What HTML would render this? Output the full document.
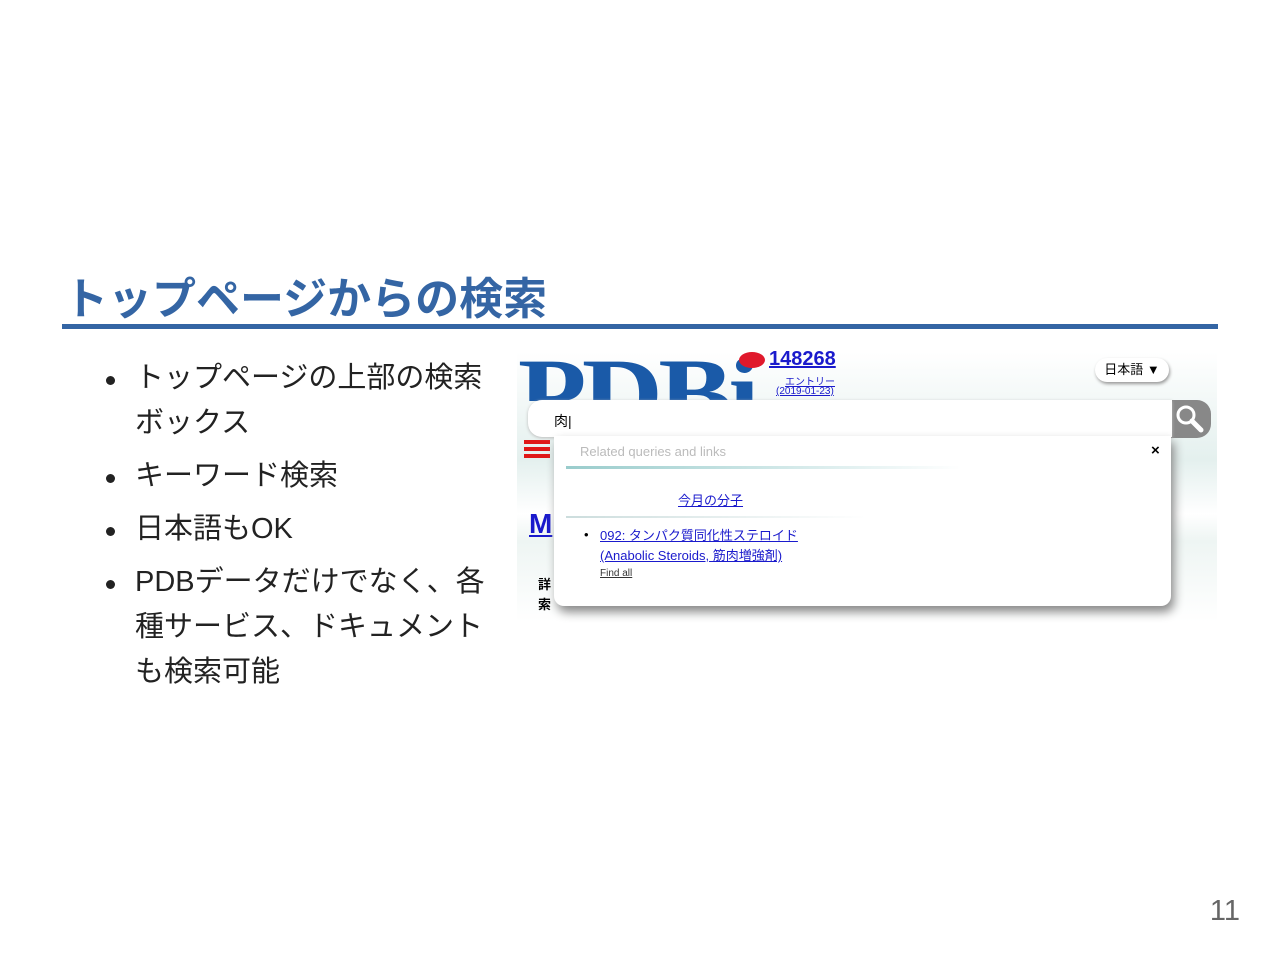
<!DOCTYPE html>
<html><head><meta charset="utf-8"><style>
body{margin:0;width:1280px;height:960px;background:#fff;position:relative;overflow:hidden;font-family:"Liberation Sans","Noto Sans CJK JP",sans-serif}
.a{position:absolute}
h1{position:absolute;left:64px;top:263px;margin:0;font-size:44px;font-weight:bold;color:#3465a4;letter-spacing:0px}
.rule{left:62px;top:324px;width:1156px;height:5px;background:#3465a4}
ul{position:absolute;left:100px;top:356px;margin:0;padding:0;list-style:none;font-size:29px;color:#222;line-height:45px}
li{position:relative;padding-left:35px;margin-bottom:8px;width:360px}
li:before{content:"";position:absolute;left:6px;top:20px;width:9px;height:9px;border-radius:50%;background:#222}
.num{right:40px;top:895px;font-size:29px;color:#666}
</style></head><body>
<h1>トップページからの検索</h1>
<div class="a rule"></div>
<ul>
<li>トップページの上部の検索ボックス</li>
<li>キーワード検索</li>
<li>日本語もOK</li>
<li>PDBデータだけでなく、各種サービス、ドキュメントも検索可能</li>
</ul>
<div class="a" style="left:517px;top:352px;width:700px;height:270px;background:linear-gradient(#fff,#e4f0ee 40%,#fff 60%,#eef5f3 70%,#fff)"></div>
<div class="a" style="left:518px;top:344px;font-family:'Liberation Serif',serif;font-weight:bold;font-size:100px;color:#1a5aa8;letter-spacing:-4px;line-height:100px;height:57px;overflow:hidden;transform:scaleX(1.12);transform-origin:left top">PDBi</div>
<div class="a" style="left:739px;top:352px;width:26px;height:16px;border-radius:50%;background:#e0192c"></div>
<div class="a" style="left:769px;top:348px;font-size:20px;font-weight:bold;color:#1a1acc;text-decoration:underline">148268</div>
<div class="a" style="left:785px;top:373px;font-size:10px;color:#1a1acc;text-decoration:underline">エントリー</div>
<div class="a" style="left:776px;top:386px;font-size:10px;color:#1a1acc;text-decoration:underline">(2019-01-23)</div>
<div class="a" style="left:1095px;top:358px;width:74px;height:24px;border-radius:12px;background:#fff;box-shadow:1px 2px 3px #999;font-size:13px;line-height:24px;text-align:center">日本語 ▼</div>
<div class="a" style="left:524px;top:440px;width:26px;height:4px;background:#e01818;box-shadow:0 7px 0 #e01818,0 14px 0 #e01818"></div>
<div class="a" style="left:529px;top:508px;font-size:28px;font-weight:bold;color:#1a1acc;text-decoration:underline">M</div>
<div class="a" style="left:538px;top:575px;font-size:13px;font-weight:bold;line-height:20px">詳<br>索</div>
<div class="a" style="left:1165px;top:400px;width:46px;height:38px;border-radius:0 14px 14px 0;background:#888"></div>
<svg class="a" style="left:1174px;top:403px" width="32" height="32" viewBox="0 0 32 32"><circle cx="12" cy="12" r="8" fill="none" stroke="#fff" stroke-width="3"/><path d="M18 18 L27 27" stroke="#fff" stroke-width="5" stroke-linecap="round"/></svg>
<div class="a" style="left:528px;top:400px;width:644px;height:37px;background:#fff;border-radius:14px 0 0 14px;box-shadow:0 1px 3px #bbb"></div>
<div class="a" style="left:554px;top:411px;font-size:14px">肉|</div>
<div class="a" style="left:554px;top:436px;width:617px;height:170px;background:#fff;border-radius:0 0 10px 10px;box-shadow:3px 6px 10px #888"></div>
<div class="a" style="left:580px;top:444px;font-size:13px;color:#bbb">Related queries and links</div>
<div class="a" style="left:1151px;top:442px;font-size:15px;font-weight:bold">×</div>
<div class="a" style="left:566px;top:466px;width:395px;height:3px;background:linear-gradient(90deg,#9cc,#fff)"></div>
<div class="a" style="left:678px;top:490px;font-size:13px;color:#1a1acc;text-decoration:underline">今月の分子</div>
<div class="a" style="left:566px;top:516px;width:300px;height:2px;background:linear-gradient(90deg,#cdd,#fff)"></div>
<div class="a" style="left:584px;top:527px;font-size:13px">•</div>
<div class="a" style="left:600px;top:526px;font-size:13px;color:#1a1acc;text-decoration:underline;line-height:20px">092: タンパク質同化性ステロイド<br>(Anabolic Steroids, 筋肉増強剤)</div>
<div class="a" style="left:600px;top:568px;font-size:10px;color:#333;text-decoration:underline">Find all</div>
<div class="a num">11</div>
</body></html>
